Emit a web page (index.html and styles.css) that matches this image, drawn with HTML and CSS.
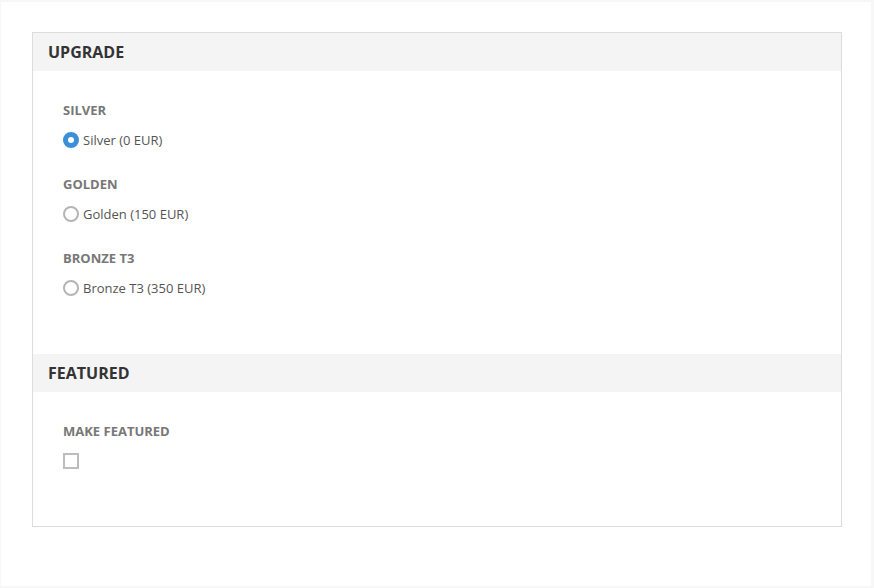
FILE: index.html
```html
<!DOCTYPE html>
<html>
<head>
<meta charset="utf-8">
<link rel="stylesheet" href="styles.css">
</head>
<body>
<div class="page">
  <div class="card">
    <div class="section-head">UPGRADE</div>
    <div class="section-body">
      <div class="group">
        <div class="label">SILVER</div>
        <label class="option"><span class="radio checked"></span>Silver (0 EUR)</label>
      </div>
      <div class="group">
        <div class="label">GOLDEN</div>
        <label class="option"><span class="radio"></span>Golden (150 EUR)</label>
      </div>
      <div class="group">
        <div class="label">BRONZE T3</div>
        <label class="option"><span class="radio"></span>Bronze T3 (350 EUR)</label>
      </div>
    </div>
    <div class="section-head">FEATURED</div>
    <div class="section-body">
      <div class="group">
        <div class="label">MAKE FEATURED</div>
        <label class="option"><span class="checkbox"></span></label>
      </div>
    </div>
  </div>
</div>
</body>
</html>
```
FILE: styles.css
```css
html { background: #f7f7f7; }
body {
  margin: 2px 3px 2px 1px;
  background: #ffffff;
  font-family: "Open Sans", "Liberation Sans", sans-serif;
  height: 584px;
}
.page {
  padding: 30px 29px 0 31px;
}
.card {
  border: 1px solid #dcdcdc;
  height: 493px;
}
.section-head {
  background: #f4f4f4;
  height: 38px;
  line-height: 38px;
  padding-left: 15px;
  font-size: 16px;
  font-weight: 700;
  color: #333333;
}
.section-body {
  padding: 30px 30px 31px 30px;
}
.group {
  margin-bottom: 25px;
}
.label {
  font-size: 13px;
  line-height: 18px;
  font-weight: 700;
  color: #777777;
  margin-bottom: 11px;
}
.option {
  display: flex;
  align-items: center;
  height: 20px;
  font-size: 13px;
  color: #555555;
}
.radio {
  width: 16px;
  height: 16px;
  box-sizing: border-box;
  border: 2px solid #b5b5b5;
  border-radius: 50%;
  margin-right: 4px;
}
.radio.checked {
  border: 5px solid #3a8fd6;
  background: #ffffff;
}
.checkbox {
  width: 16px;
  height: 16px;
  box-sizing: border-box;
  border: 2px solid #bdbdbd;
}
```
